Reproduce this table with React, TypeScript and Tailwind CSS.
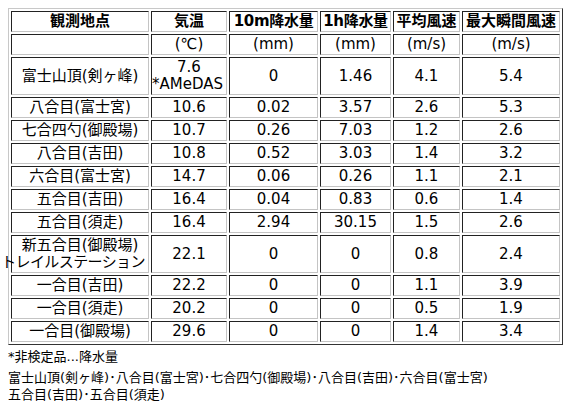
import React from "react";

type Row = { name: React.ReactNode; temp: React.ReactNode; r10: string; r1h: string; avg: string; max: string; tall?: boolean };

const rows: Row[] = [
  { name: "富士山頂(剣ヶ峰)", temp: (<><div>7.6</div><div className="-ml-[3px] whitespace-nowrap">*AMeDAS</div></>), r10: "0", r1h: "1.46", avg: "4.1", max: "5.4", tall: true },
  { name: "八合目(富士宮)", temp: "10.6", r10: "0.02", r1h: "3.57", avg: "2.6", max: "5.3" },
  { name: "七合四勺(御殿場)", temp: "10.7", r10: "0.26", r1h: "7.03", avg: "1.2", max: "2.6" },
  { name: "八合目(吉田)", temp: "10.8", r10: "0.52", r1h: "3.03", avg: "1.4", max: "3.2" },
  { name: "六合目(富士宮)", temp: "14.7", r10: "0.06", r1h: "0.26", avg: "1.1", max: "2.1" },
  { name: "五合目(吉田)", temp: "16.4", r10: "0.04", r1h: "0.83", avg: "0.6", max: "1.4" },
  { name: "五合目(須走)", temp: "16.4", r10: "2.94", r1h: "30.15", avg: "1.5", max: "2.6" },
  { name: (<><div>新五合目(御殿場)</div><div className="whitespace-nowrap -ml-[16px] -mr-[2px] tracking-[-0.6px]">トレイルステーション</div></>), temp: "22.1", r10: "0", r1h: "0", avg: "0.8", max: "2.4", tall: true },
  { name: "一合目(吉田)", temp: "22.2", r10: "0", r1h: "0", avg: "1.1", max: "3.9" },
  { name: "一合目(須走)", temp: "20.2", r10: "0", r1h: "0", avg: "0.5", max: "1.9" },
  { name: "一合目(御殿場)", temp: "29.6", r10: "0", r1h: "0", avg: "1.4", max: "3.4" },
];

const cell = "border border-t-[#222] border-l-[#222] border-r-[#c4c4c4] border-b-[#c4c4c4] p-[1px] text-center align-middle leading-[17px]";

export default function App() {
  return (
    <div className="bg-white text-black p-2 min-h-[407px] text-[15px]" style={{ fontFamily: '"DejaVu Sans", "Noto Sans CJK JP", sans-serif' }}>
      <table className="table-fixed w-[555px] border-separate border-spacing-[2px] border border-t-[#c8c8c8] border-l-[#c8c8c8] border-r-[#333] border-b-[#333]">
        <colgroup>
          <col className="w-[138px]" />
          <col className="w-[76px]" />
          <col className="w-[89px]" />
          <col className="w-[71px]" />
          <col className="w-[67px]" />
          <col className="w-[98px]" />
        </colgroup>
        <thead>
          <tr className="font-bold">
            <th className={cell + " h-[21px]"}>観測地点</th>
            <th className={cell}>気温</th>
            <th className={cell + " whitespace-nowrap tracking-[-0.3px]"}>10m降水量</th>
            <th className={cell + " whitespace-nowrap tracking-[-0.3px]"}>1h降水量</th>
            <th className={cell + " whitespace-nowrap"}>平均風速</th>
            <th className={cell + " whitespace-nowrap"}>最大瞬間風速</th>
          </tr>
          <tr>
            <td className={cell + " h-[21px]"}></td>
            <td className={cell}>(℃)</td>
            <td className={cell}>(mm)</td>
            <td className={cell}>(mm)</td>
            <td className={cell}>(m/s)</td>
            <td className={cell}>(m/s)</td>
          </tr>
        </thead>
        <tbody>
          {rows.map((r, i) => (
            <tr key={i}>
              <td className={cell + (r.tall ? " h-[38px]" : " h-[21px]")}>{r.name}</td>
              <td className={cell}>{r.temp}</td>
              <td className={cell}>{r.r10}</td>
              <td className={cell}>{r.r1h}</td>
              <td className={cell}>{r.avg}</td>
              <td className={cell}>{r.max}</td>
            </tr>
          ))}
        </tbody>
      </table>
      <div className="text-[13px] leading-[17px] mt-[3px]">*非検定品...降水量</div>
      <div className="text-[13px] leading-[17px] mt-[4px]">
        <div>富士山頂(剣ヶ峰)･八合目(富士宮)･七合四勺(御殿場)･八合目(吉田)･六合目(富士宮)</div>
        <div>五合目(吉田)･五合目(須走)</div>
      </div>
    </div>
  );
}
